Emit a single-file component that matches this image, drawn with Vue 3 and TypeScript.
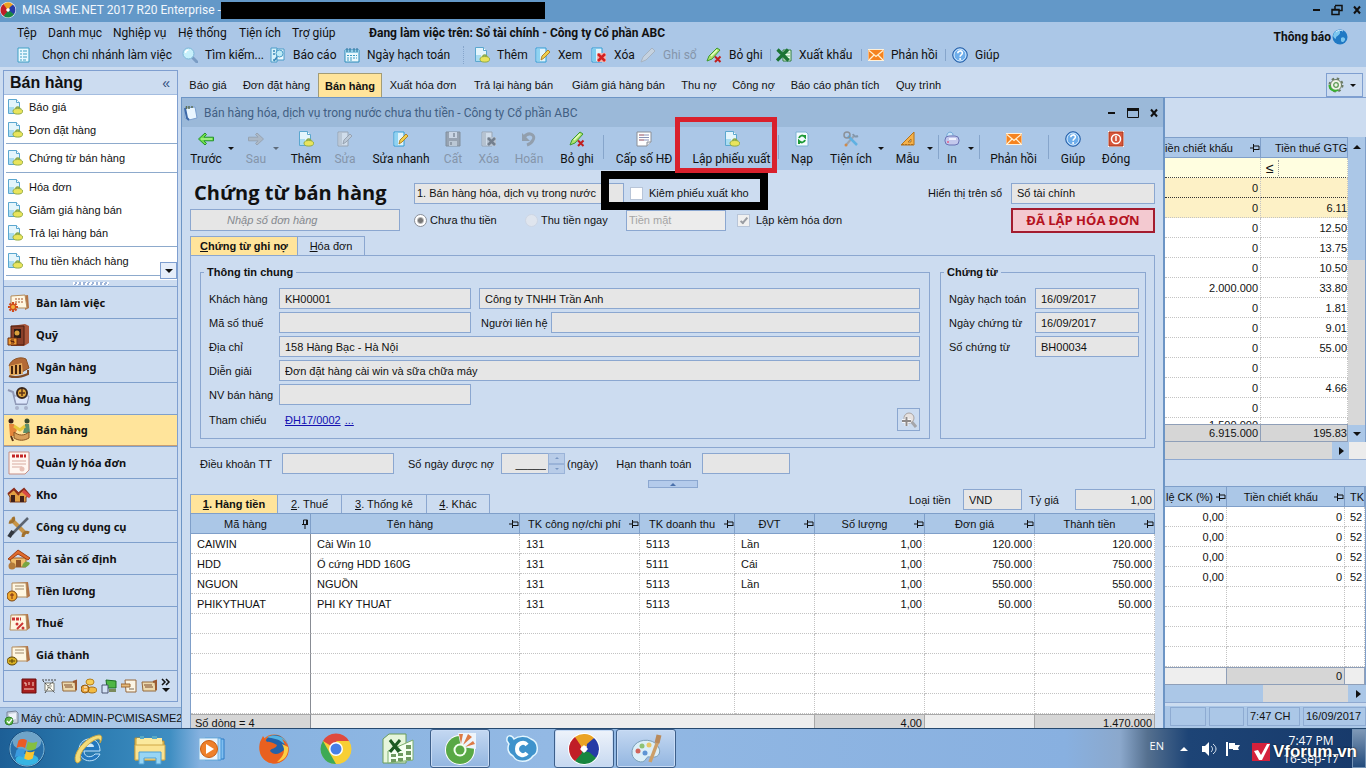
<script setup lang="ts">
import { ref } from 'vue'

interface Tool { label: string; icon: string; off?: boolean; sep?: boolean; grip?: boolean }
interface Action { label?: string; icon?: string; off?: boolean; sep?: boolean; arrow?: boolean; marked?: boolean }
interface Column { label: string; align: string }

const menus = ['Tệp', 'Danh mục', 'Nghiệp vụ', 'Hệ thống', 'Tiện ích', 'Trợ giúp']

const tools: Tool[] = [
  { label: 'Chọn chi nhánh làm việc', icon: 'list' },
  { label: 'Tìm kiếm...', icon: 'search' },
  { label: 'Báo cáo', icon: 'report' },
  { label: 'Ngày hạch toán', icon: 'calendar', grip: true },
  { label: 'Thêm', icon: 'doc' },
  { label: 'Xem', icon: 'edit' },
  { label: 'Xóa', icon: 'delete' },
  { label: 'Ghi sổ', icon: 'pen', off: true },
  { label: 'Bỏ ghi', icon: 'penx', sep: true },
  { label: 'Xuất khẩu', icon: 'excel', sep: true },
  { label: 'Phản hồi', icon: 'mail', sep: true },
  { label: 'Giúp', icon: 'help' },
]

const shortcuts = [
  ['Báo giá', 'Đơn đặt hàng'],
  ['Chứng từ bán hàng'],
  ['Hóa đơn', 'Giảm giá hàng bán', 'Trả lại hàng bán'],
  ['Thu tiền khách hàng'],
]

const modules = [
  { label: 'Bàn làm việc', icon: 'desk' },
  { label: 'Quỹ', icon: 'safe' },
  { label: 'Ngân hàng', icon: 'bank' },
  { label: 'Mua hàng', icon: 'cart' },
  { label: 'Bán hàng', icon: 'sell' },
  { label: 'Quản lý hóa đơn', icon: 'invoice' },
  { label: 'Kho', icon: 'store' },
  { label: 'Công cụ dụng cụ', icon: 'wrench' },
  { label: 'Tài sản cố định', icon: 'house' },
  { label: 'Tiền lương', icon: 'salary' },
  { label: 'Thuế', icon: 'tax' },
  { label: 'Giá thành', icon: 'cost' },
]
const activeModule = ref('Bán hàng')
const miniIcons = ['m1', 'm2', 'm3', 'm4', 'm5', 'm6', 'm3']

const pages = ['Báo giá', 'Đơn đặt hàng', 'Bán hàng', 'Xuất hóa đơn', 'Trả lại hàng bán', 'Giảm giá hàng bán', 'Thu nợ', 'Công nợ', 'Báo cáo phân tích', 'Quy trình']
const activePage = ref('Bán hàng')

const actions: Action[] = [
  { label: 'Trước', icon: 'prev' }, { arrow: true },
  { label: 'Sau', icon: 'next', off: true }, { arrow: true, off: true },
  { label: 'Thêm', icon: 'doc' },
  { label: 'Sửa', icon: 'edit', off: true },
  { label: 'Sửa nhanh', icon: 'edit' },
  { label: 'Cất', icon: 'save', off: true },
  { label: 'Xóa', icon: 'delete', off: true },
  { label: 'Hoãn', icon: 'undo', off: true },
  { label: 'Bỏ ghi', icon: 'penx' },
  { label: 'Cấp số HĐ', icon: 'form', sep: true },
  { label: 'Lập phiếu xuất', icon: 'doc', marked: true },
  { label: 'Nạp', icon: 'refresh', sep: true },
  { label: 'Tiện ích', icon: 'tools' }, { arrow: true },
  { label: 'Mẫu', icon: 'ruler' }, { arrow: true },
  { label: 'In', icon: 'printer', sep: true }, { arrow: true },
  { label: 'Phản hồi', icon: 'mail', sep: true },
  { label: 'Giúp', icon: 'help', sep: true },
  { label: 'Đóng', icon: 'power' },
]

const gridTabs = [['1', 'Hàng tiền'], ['2', 'Thuế'], ['3', 'Thống kê'], ['4', 'Khác']]
const activeGridTab = ref('1')

const columns: Column[] = [
  { label: 'Mã hàng', align: 'l' },
  { label: 'Tên hàng', align: 'l' },
  { label: 'TK công nợ/chi phí', align: 'l' },
  { label: 'TK doanh thu', align: 'l' },
  { label: 'ĐVT', align: 'l' },
  { label: 'Số lượng', align: 'r' },
  { label: 'Đơn giá', align: 'r' },
  { label: 'Thành tiền', align: 'r' },
]
const blank = ['', '', '', '', '', '', '', '']
const rows = [
  ['CAIWIN', 'Cài Win 10', '131', '5113', 'Lần', '1,00', '120.000', '120.000'],
  ['HDD', 'Ổ cứng HDD 160G', '131', '5111', 'Cái', '1,00', '750.000', '750.000'],
  ['NGUON', 'NGUỒN', '131', '5113', 'Lần', '1,00', '550.000', '550.000'],
  ['PHIKYTHUAT', 'PHI KY THUAT', '131', '5113', '', '1,00', '50.000', '50.000'],
  blank, blank, blank, blank, blank,
]
const totals = ['Số dòng = 4', '', '', '', '', '4,00', '', '1.470.000']

const listRows = [
  ['0', ''], ['0', '6.11'], ['0', '12.50'], ['0', '13.75'], ['0', '10.50'], ['2.000.000', '33.80'],
  ['0', '1.81'], ['0', '9.01'], ['0', '55.00'], ['0', ''], ['0', '4.66'], ['0', ''],
]
const detailRows = [
  ['0,00', '0', '52'], ['0,00', '0', '52'], ['0,00', '0', '52'], ['0,00', '0', '52'],
  ['', '', ''], ['', '', ''], ['', '', ''], ['', '', ''],
]

const apps = [
  { name: 'Internet Explorer', icon: 'ie' },
  { name: 'Explorer', icon: 'folder' },
  { name: 'Media Player', icon: 'media' },
  { name: 'Firefox', icon: 'firefox' },
  { name: 'Chrome', icon: 'chrome' },
  { name: 'Excel', icon: 'xls' },
  { name: 'Cốc Cốc', icon: 'coccoc', open: true },
  { name: 'CCleaner', icon: 'cc' },
  { name: 'MISA', icon: 'misa', open: true, front: true },
  { name: 'Paint', icon: 'paint', open: true },
]
</script>

<template>
  <div class="screen">
    <svg class="sprite" aria-hidden="true">
      <symbol id="doc" viewBox="0 0 16 16"><path d="M1.500.5h8l3 3v11h-11z" fill="#e4f5fc" stroke="#5ba7cf" /><path d="M9.500.5v3h3" fill="#fff" stroke="#5ba7cf" /><path d="M2 8h5v6H2z" fill="#a9dcf0" /><path d="M8.500 11c0-4 4.500-4 4.500 0" fill="#dff0c0" stroke="#8aa84a" stroke-width="1.300" /><ellipse cx="10.800" cy="12.300" rx="4.800" ry="2.800" fill="#e9e45c" stroke="#93ab45" /></symbol>
      <symbol id="list" viewBox="0 0 16 16"><path d="M1 1h11v14H1z" fill="#e8f8ff" stroke="#3f9fc4" /><path d="M3 4h2M6 4h4M3 7h2M6 7h4M3 10h2M6 10h4M3 13h2M6 13h3" stroke="#3f9fc4" /></symbol>
      <symbol id="search" viewBox="0 0 16 16"><path d="M10 10l5 5" stroke="#7a9cc4" stroke-width="3" stroke-linecap="round" /><circle cx="6.500" cy="6.500" r="5.500" fill="#c6f0fb" stroke="#7db7d8" /><path d="M3.500 6a3 3 0 0 1 3-3" stroke="#fff" stroke-width="1.500" fill="none" /></symbol>
      <symbol id="report" viewBox="0 0 16 16"><path d="M1 1h6v14H1z" fill="#d5f1fa" stroke="#4b9cc8" /><path d="M7 2h7v11H7z" fill="#eefaff" stroke="#4b9cc8" /><circle cx="9.500" cy="6.500" r="3.500" fill="#bdebf7" stroke="#4b9cc8" /><path d="M3 4h2M3 7h2M3 13h2M7 10l-3 4" stroke="#3a88b7" stroke-width="1.500" /></symbol>
      <symbol id="calendar" viewBox="0 0 16 16"><path d="M1 3h14v12H1z" fill="#e9f8fd" stroke="#2c8dba" /><path d="M1 3h14v3H1z" fill="#8fcbe4" /><path d="M3 1v4M6 1v4M10 1v4M13 1v4" stroke="#216f98" /><path d="M3 8.500h10M3 11h10M3 13h6" stroke="#3b9cc4" stroke-dasharray="2 1" /></symbol>
      <symbol id="edit" viewBox="0 0 16 16"><path d="M1 1h10v14H1z" fill="#dff3fc" stroke="#2f9cd5" /><path d="M2 2h3v12H2z" fill="#8fd3f2" /><path d="M6 13l1-4 6-6 2 2-6 6z" fill="#f0cf4e" stroke="#b0842b" /></symbol>
      <symbol id="delete" viewBox="0 0 16 16"><path d="M1 1h10v14H1z" fill="#dff3fc" stroke="#2f9cd5" /><path d="M2 2h3v12H2z" fill="#7ccdf0" /><path d="M6 6h9v9H6z" fill="#f0b5ae" /><path d="M7 7l7 7M14 7l-7 7" stroke="#d32020" stroke-width="2.500" /></symbol>
      <symbol id="pen" viewBox="0 0 16 16"><path d="M1 15l2-5L12 1l3 3-9 9z" fill="#d9dde0" stroke="#9aa5b0" /></symbol>
      <symbol id="penx" viewBox="0 0 16 16"><path d="M1 14l2-5L11 1l3 2-8 9z" fill="#aee26c" stroke="#3d9b2e" /><path d="M5 9L11 3" stroke="#e8ffc8" stroke-width="1.500" /><path d="M9 9.500l5.500 5.500M14.500 9.500L9 15" stroke="#c01e1e" stroke-width="2" /></symbol>
      <symbol id="excel" viewBox="0 0 16 16"><path d="M7 3h8v11H7z" fill="#f0fff0" stroke="#2d7d3a" /><path d="M8 6h6M8 9h6M8 12h6" stroke="#6cb076" /><path d="M1.500 2.500l11 11M12 2.500l-11 11" stroke="#1b7434" stroke-width="3.200" /></symbol>
      <symbol id="mail" viewBox="0 0 16 16"><path d="M0 2.500h16v11H0z" fill="#f58320" stroke="#fff0d8" /><path d="M1 3.500l7 6 7-6M1 13l5-5M15 13l-5-5" fill="none" stroke="#fff2d6" stroke-width="1.200" /></symbol>
      <symbol id="help" viewBox="0 0 16 16"><circle cx="8" cy="8" r="7.300" fill="#4a90dc" stroke="#275ea4" /><circle cx="8" cy="8" r="6" fill="#6eaeeb" stroke="#dff0ff" /><path d="M5.800 6.200c0-3 4.600-3 4.600-.2 0 2-2.300 1.900-2.300 3.700" fill="none" stroke="#fff" stroke-width="1.600" /><circle cx="8.100" cy="11.900" r="1" fill="#fff" /></symbol>
      <symbol id="globe" viewBox="0 0 16 16"><circle cx="8" cy="8" r="7.500" fill="#2079c4" /><path d="M2 4c3-4 7-3 6 0S4 7 4 9s-2 0-3-2zM9 9c2-2 5 0 4 2s-3 3-4 1z" fill="#7cc6ef" /><path d="M4 3c2-2 5-2 7-1" stroke="#d6f1ff" fill="none" /></symbol>
      <symbol id="gear" viewBox="0 0 16 16"><circle cx="8" cy="8" r="6.500" fill="none" stroke="#6b7a63" stroke-width="2" stroke-dasharray="2.500 2.600" /><circle cx="8" cy="8" r="5.500" fill="#eef3e6" stroke="#6b7a63" /><circle cx="8" cy="8" r="2.300" fill="none" stroke="#5c9a55" stroke-width="1.300" /><path d="M1.500 8c0 5 5 7 8.500 5" stroke="#38b32f" stroke-width="2" fill="none" /></symbol>
      <symbol id="prev" viewBox="0 0 16 16"><path d="M.5 8L7 2l1.500 1.500L6 6.200h9.500v3.600H6l2.500 2.700L7 14z" fill="#6fdc4a" stroke="#23952a" /><path d="M3 8h11" stroke="#c8ffab" /></symbol>
      <symbol id="next" viewBox="0 0 16 16"><path d="M15.500 8L9 2 7.500 3.500 10 6.200H.5v3.600H10l-2.500 2.700L9 14z" fill="#a6adb5" stroke="#7c8896" /></symbol>
      <symbol id="save" viewBox="0 0 16 16"><path d="M1 1h14v14H1z" fill="#808891" stroke="#59626d" /><path d="M4 1h8v6H4z" fill="#dfe3e7" /><path d="M4 10h8v5H4z" fill="#c2c8cf" /><path d="M9 2v4M6 11v3" stroke="#59626d" stroke-width="1.500" /></symbol>
      <symbol id="undo" viewBox="0 0 16 16"><path d="M3 6c5-6 12-2 9 3-1 2-3 4-6 5" fill="none" stroke="#76808d" stroke-width="3" /><path d="M1 2v8h8z" fill="#76808d" /></symbol>
      <symbol id="form" viewBox="0 0 16 16"><path d="M1 1h14v10l-4 4H1z" fill="#fff" stroke="#8a8f98" /><path d="M3 4h10M3 6.500h10M3 9h10" stroke="#8a94b8" /><path d="M3 4h5M3 9h5" stroke="#c88080" /><path d="M11 15v-4h4" fill="#e6e8ec" stroke="#8a8f98" /></symbol>
      <symbol id="refresh" viewBox="0 0 16 16"><path d="M2 1h10l2 2v12H2z" fill="#f2fbff" stroke="#7db2d2" /><path d="M5 7c1-3 4-3 6-1V4M11 9c-1 3-4 3-6 1v3" fill="none" stroke="#1d9a36" stroke-width="2" /></symbol>
      <symbol id="tools" viewBox="0 0 16 16"><path d="M3 14l8-9" stroke="#9aa4b1" stroke-width="2" /><path d="M5 5l9 9" stroke="#5fb1e2" stroke-width="2.500" /><circle cx="4" cy="4" r="3" fill="none" stroke="#8b9199" stroke-width="1.500" /><path d="M10 3c1 3 3 3 5 2" stroke="#8397ab" stroke-width="2" fill="none" /><circle cx="3" cy="14" r="1.500" fill="#d08a49" /></symbol>
      <symbol id="ruler" viewBox="0 0 16 16"><path d="M1 14L14 1v13z" fill="#f5b14a" stroke="#b77317" /><path d="M8 11l3-3v3z" fill="#abc7e7" stroke="#b77317" /><path d="M3 14v-1M6 14v-1M9 14v-1M12 14v-1" stroke="#8a4e0a" /></symbol>
      <symbol id="printer" viewBox="0 0 16 16"><path d="M3 6C2 0 9 0 9 4" fill="#c9e6fa" stroke="#6ba4d6" /><rect x="1" y="5" width="14" height="9" rx="4" fill="#c3c8ec" stroke="#6a72b4" /><path d="M5 8h7" stroke="#f1f2ff" stroke-width="2" /><circle cx="4" cy="11" r="1" fill="#e3608a" /></symbol>
      <symbol id="power" viewBox="0 0 16 16"><path d="M0 0h16v16H0z" fill="#fff" /><path d="M1 1h14v14H1z" fill="#d7563a" stroke="#a9361f" /><circle cx="8" cy="8" r="4.500" fill="none" stroke="#fff" stroke-width="1.500" /><path d="M8 5v5" stroke="#fff" stroke-width="1.500" /></symbol>
      <symbol id="clip" viewBox="0 0 16 16"><path d="M2 3l10-1 2 11-8 2-4-2z" fill="#eaf6ff" stroke="#7ba0cf" /><path d="M2 3l2 10 2 2" fill="none" stroke="#3c68a8" stroke-width="2" /><path d="M3.500 1v3M6 1v3M9 1v2" stroke="#5e6f55" stroke-width="1.500" /></symbol>
      <symbol id="host" viewBox="0 0 16 16"><path d="M3 2l9-1 2 2v10l-9 1-2-2z" fill="#c7cfdc" stroke="#76849a" /><path d="M5 4l7-1v6l-7 1z" fill="#eef3fa" /><circle cx="5" cy="11" r="4" fill="#5fb648" stroke="#2e7d2a" /><path d="M3 11l2 2 3-4" fill="none" stroke="#fff" stroke-width="1.300" /></symbol>
      <symbol id="pin" viewBox="0 0 10 10"><path d="M0 5h3M3.500 1v8M4 3h5v4M4 6.500h5" fill="none" stroke="#111" /></symbol>
      <symbol id="pinv" viewBox="0 0 10 10"><path d="M5 10V6M2 5.500h6M3.500 5V1h4v4M6.500 1v4" fill="none" stroke="#111" /></symbol>
      <symbol id="zoomin" viewBox="0 0 16 16"><path d="M10 9l5 6" stroke="#a5a6aa" stroke-width="3" /><circle cx="8" cy="6" r="5" fill="#e6e2e0" stroke="#a8a3a2" /><path d="M1 9h9M5.500 5v9" stroke="#fff" stroke-width="3.500" /><path d="M1 9h9M5.500 5v9" stroke="#8e8a89" stroke-width="2" /></symbol>

      <symbol id="desk" viewBox="0 0 24 24"><path d="M5 6l16-2 1 13-4 2V6z" fill="#b27447" /><path d="M4 5l14-1 2 13H4z" fill="#fff7e2" stroke="#b58d5c" /><path d="M8 8h9M8 11h8" stroke="#a5522c" stroke-dasharray="2 1" /><path d="M6 11v10M1 16h10M2.500 12.500l7 7M9.500 12.500l-7 7" stroke="#d04c1c" stroke-width="2.200" /><circle cx="6" cy="16" r="2" fill="#f2b13b" /></symbol>
      <symbol id="safe" viewBox="0 0 24 24"><path d="M4 3l14-2 4 2v17l-5 3H4z" fill="#a9563a" /><path d="M4 3h13v19H4z" fill="#8a4029" stroke="#4a1c0e" /><path d="M7 6h7v9H7z" fill="#2a1a14" /><circle cx="10" cy="10" r="2.500" fill="#d9a13c" /><path d="M1 15h9v7H1z" fill="#ef9a33" stroke="#6b2c0f" /><path d="M7 17H4v1.500h3V20H4" stroke="#5a230d" fill="none" /></symbol>
      <symbol id="bank" viewBox="0 0 24 24"><path d="M2 11C4 4 13 1 19 4l3 9-7 4z" fill="#b36a36" stroke="#8c5429" /><path d="M2 11l13-3 1 11-13 2z" fill="#e4a95a" /><path d="M5 11v8M9 10v9M13 10v9" stroke="#41210f" stroke-width="2" /><path d="M2 21c5 2 12 1 19-2v-4" fill="none" stroke="#7e4a26" stroke-width="2" /></symbol>
      <symbol id="cart" viewBox="0 0 24 24"><path d="M1 3l5 2 3 12h11" fill="none" stroke="#9098b4" stroke-width="2" /><path d="M7 9h15l-2 8H9z" fill="#dce6fb" stroke="#8e99b9" /><circle cx="15" cy="6" r="5" fill="#e2a73a" stroke="#3c281c" stroke-width="2" /><path d="M12 6h6M15 2v7" stroke="#5e3317" stroke-width="1.500" /><circle cx="10" cy="21" r="2" fill="#a9b3cc" /><circle cx="19" cy="21" r="2" fill="#a9b3cc" /></symbol>
      <symbol id="sell" viewBox="0 0 24 24"><circle cx="4" cy="3" r="2.500" fill="#3a2218" /><path d="M2 6h5l3 6-3 6H3z" fill="#e5863b" /><circle cx="20" cy="3" r="2.500" fill="#394a2d" /><path d="M18 6h4l1 9h-7z" fill="#5c8f6b" /><path d="M7 14c5 4 10 4 15 0v6c-5 3-10 3-15 0z" fill="#d8a05b" stroke="#8a5523" /><path d="M7 8l6 4 5-4" stroke="#e7c83c" stroke-width="3" fill="none" /><path d="M4 18l2 5" stroke="#593017" stroke-width="2" /></symbol>
      <symbol id="invoice" viewBox="0 0 24 24"><path d="M2 1h20v18l-4 4H2z" fill="#fff7f2" stroke="#c78f84" /><path d="M5 5h14" stroke="#c32626" stroke-width="3" stroke-dasharray="3 1" /><path d="M5 10h14M5 13h14M5 16h10" stroke="#d8aba0" /><circle cx="15" cy="18" r="2.500" fill="#e8c2b8" /></symbol>
      <symbol id="store" viewBox="0 0 24 24"><path d="M1 11l6-5 5 4 5-4 6 7-4 1v5H3v-5z" fill="#e3a043" stroke="#7a3a1a" /><path d="M1 11l6-5 5 6M12 10l5-4 6 7" stroke="#8c2d1c" stroke-width="2" fill="none" /><path d="M4 12h4v7H4zM13 13h4v6h-4z" fill="#40201a" /><path d="M16 8l7 6" stroke="#d84848" stroke-width="3" /></symbol>
      <symbol id="wrench" viewBox="0 0 24 24"><path d="M4 4l15 15" stroke="#c79447" stroke-width="4" /><path d="M21 3L5 19" stroke="#5b6470" stroke-width="2.500" /><path d="M2 7c3 1 6-2 4-5M16 22c0-4 3-6 6-4" fill="none" stroke="#a1712e" stroke-width="3" /><path d="M6 16l-4 6" stroke="#32373f" stroke-width="4" /></symbol>
      <symbol id="house" viewBox="0 0 24 24"><path d="M3 11h16v9H5z" fill="#f0bd6c" stroke="#9f6327" /><path d="M1 12L11 3l12 8-2 2-10-6-8 6z" fill="#e06c2c" stroke="#a03e14" /><path d="M9 13h5v7H9z" fill="#91552a" /><path d="M15 20c1-6 5-6 8-4-1 3-4 5-8 4z" fill="#77a544" /><circle cx="5" cy="19" r="3.500" fill="#b47b3b" /></symbol>
      <symbol id="salary" viewBox="0 0 24 24"><path d="M6 4l15-1 2 14-3 2z" fill="#b27447" /><path d="M5 4h14l1 14H5z" fill="#fff7e2" stroke="#b58d5c" /><path d="M8 7h9M8 10h9" stroke="#a08a6d" /><circle cx="5" cy="17" r="5" fill="#f0a92e" stroke="#7b4410" /><path d="M5 14v6M3 16h4" stroke="#7b2f10" /></symbol>
      <symbol id="tax" viewBox="0 0 24 24"><path d="M6 4l15-1 2 14-3 2z" fill="#b27447" /><path d="M4 4h15l1 15H3z" fill="#fff7e2" stroke="#b58d5c" /><path d="M5 8h9" stroke="#cc3434" stroke-width="3" stroke-dasharray="3 1" /><path d="M10 18l6-6" stroke="#cc3434" stroke-width="2" /><circle cx="10" cy="13" r="1.500" fill="#cc3434" /><circle cx="16" cy="17" r="1.500" fill="#cc3434" /></symbol>
      <symbol id="cost" viewBox="0 0 24 24"><path d="M6 4l15-1 2 14-3 2z" fill="#b27447" /><path d="M5 4h14l1 14H5z" fill="#fff7e2" stroke="#b58d5c" /><path d="M8 7h9M8 10h9" stroke="#a08a6d" /><ellipse cx="5" cy="18" rx="5" ry="4" fill="#d8b024" stroke="#5d4408" /><path d="M2 18h6M5 16v4" stroke="#5d4408" /></symbol>

      <symbol id="m1" viewBox="0 0 16 16"><path d="M1 1h14v14H1z" fill="#a81f1f" stroke="#6b0f0f" /><path d="M3 5h2v3M8 4v3M12 4v4M3 11h10" stroke="#ffd9c8" fill="none" /></symbol>
      <symbol id="m2" viewBox="0 0 16 16"><path d="M4 5h9v8H4z" fill="#fffef5" stroke="#7b7b70" /><path d="M1 2h14M2 3l5 5 6-5M4 15l4-6 6 6" stroke="#444" fill="none" stroke-dasharray="2 1" /><path d="M6 8h5M6 10h4" stroke="#9a9a8c" /></symbol>
      <symbol id="m3" viewBox="0 0 16 16"><path d="M1 4h13l1 9H2z" fill="#ecd9ad" stroke="#94683a" /><path d="M3 7h8M4 9h8" stroke="#7d4a2c" /><path d="M12 4l3-1v9" stroke="#9c5b32" stroke-width="2" fill="none" /></symbol>
      <symbol id="m4" viewBox="0 0 16 16"><ellipse cx="9" cy="4" rx="4" ry="3" fill="#f6cd55" stroke="#b5801d" /><ellipse cx="11" cy="12" rx="5" ry="3" fill="#f3bb42" stroke="#a5701b" /><ellipse cx="4" cy="11" rx="4" ry="4" fill="#eaa63c" stroke="#8f5b16" /><path d="M3 9h3M3 12h3" stroke="#fff" /></symbol>
      <symbol id="m5" viewBox="0 0 16 16"><path d="M5 2l10 1v7H6z" fill="#4fb644" stroke="#1c6d22" /><path d="M1 7h6v8H1z" fill="#d4e2f6" stroke="#4a5470" /><path d="M8 11h7v3H8z" fill="#7b8a5c" /></symbol>
      <symbol id="m6" viewBox="0 0 16 16"><path d="M4 2h11v12H5z" fill="#fbf5e5" stroke="#96683d" /><path d="M0 6h9v3H0z" fill="#e7bb7b" stroke="#9a6634" /><path d="M8 11h5" stroke="#7c6a53" /></symbol>

      <symbol id="misa" viewBox="0 0 32 32"><circle cx="16" cy="16" r="16" fill="#fff" /><path d="M7 4a15 15 0 0 1 19 1l-6 8-9 1z" fill="#eba324" /><path d="M26 5a15 15 0 0 1 2 20l-10-5 1-9z" fill="#263aa6" /><path d="M28 25a15 15 0 0 1-21 3l6-10 8 1z" fill="#188640" /><path d="M7 28A15 15 0 0 1 7 4l6 9 1 7z" fill="#c01e27" /><path d="M16 12l4 4-4 4-4-4z" fill="#fff" /></symbol>
      <symbol id="ie" viewBox="0 0 32 32"><path d="M28 18H12c0 7 8 7 11 3h5c-5 11-21 8-21-4C7 3 28 1 28 18z" fill="#2377bd" stroke="#bfe4fb" /><path d="M12 14c1-5 10-5 10 0z" fill="#cbe8fa" /><path d="M5 30C-2 25 11 4 27 2c4 0 3 5 1 8 1-5-2-5-7-2C13 13 6 22 9 27c-1 2-3 3-4 3z" fill="#f3dc7a" stroke="#c6a544" /></symbol>
      <symbol id="folder" viewBox="0 0 32 32"><path d="M1 5h8l2 3h19v19H1z" fill="#e9c967" stroke="#b98d2f" /><path d="M3 5h25v20H3z" fill="#fbe99d" /><path d="M1 12h30v15H1z" fill="#fbe391" stroke="#cfa747" /><path d="M5 31V19h22v12h-5v-6H10v6z" fill="#97d5f4" stroke="#4c9fd4" /><path d="M6 3h4v3H6zM18 3h5v3h-5z" fill="#59aac5" /></symbol>
      <symbol id="media" viewBox="0 0 32 32"><path d="M14 6h14v20H14z" fill="#7fbef0" stroke="#2d7bc5" /><path d="M9 5h16v22H9z" fill="#abd8f9" stroke="#4292d4" /><path d="M3 5h19v22H3z" fill="#eaf5fd" stroke="#7db3dc" /><circle cx="13" cy="16" r="8.500" fill="#ee802b" stroke="#c85d13" /><path d="M10 11l8 5-8 5z" fill="#fff" /></symbol>
      <symbol id="firefox" viewBox="0 0 32 32"><circle cx="16" cy="16" r="14.500" fill="#ed6b20" /><circle cx="17" cy="13" r="11" fill="#2462a9" /><path d="M9 4c8-4 20 0 21 9l-5-3c-5-5-10-4-16-6z" fill="#54b3e3" /><path d="M2 9l3-6 4 6c4-1 7 2 10 3-1 4-6 3-7 6 4 5 10 3 14-1 2-4 0-8-2-11 8 4 9 15 2 21C13 37-2 24 2 9z" fill="#e9601f" /><path d="M30 14c1 8-4 14-11 15 7-6 9-12 5-18z" fill="#fbce45" /></symbol>
      <symbol id="chrome" viewBox="0 0 32 32"><circle cx="16" cy="16" r="15" fill="#f7cf35" /><path d="M16 16L3 8a15 15 0 0 1 26 0z" fill="#df4a3e" /><path d="M3 8l9 16 4 7A15 15 0 0 1 3 8z" fill="#3eaa55" /><path d="M16 8h13a15 15 0 0 1-13 23l7-12z" fill="#f7cf35" /><circle cx="16" cy="16" r="7" fill="#fff" /><circle cx="16" cy="16" r="5.500" fill="#477fe6" /></symbol>
      <symbol id="xls" viewBox="0 0 32 32"><path d="M1 6l6-5h17v29H1z" fill="#e6f6db" stroke="#6a9c58" /><path d="M6 18l25-11v20l-25 3z" fill="#f5fff1" stroke="#7bae6c" /><path d="M8 6l12 12h-5zM18 6l-9 12h-2z" fill="#1e6b22" /><path d="M8 7l9 12M18 7L8 19" stroke="#1e5b22" stroke-width="3" /><path d="M9 21h5v3H9zM16 20h5v3h-5zM24 18h5v4h-5zM9 26h5v3H9zM16 25h5v3h-5zM24 24h5v3h-5zM24 12h5v4h-5z" fill="#6f9a60" /></symbol>
      <symbol id="coccoc" viewBox="0 0 32 32"><circle cx="16" cy="17" r="15" fill="#fff" /><circle cx="16" cy="17" r="14" fill="#58a845" /><path d="M17 14L14 0h18v16z" fill="#edf4fb" /><path d="M17 11L15 1h4zM19 12l5-11 4 3zM21 14l8-6 2 3z" fill="#dd7a45" /><circle cx="16" cy="17" r="6.500" fill="#f2fff0" /><circle cx="16" cy="17" r="4.500" fill="#58a845" /></symbol>
      <symbol id="cc" viewBox="0 0 32 32"><path d="M1 8c-1-7 5-6 7-2 4-3 12-4 17 0 8 3 8 14 2 17-5 7-16 7-20 0-5-2-6-8-4-12z" fill="#3f93cc" stroke="#e3f6ff" stroke-width="1.500" /><path d="M21 12c-3-4-10-2-10 4s7 8 10 4" fill="none" stroke="#fff" stroke-width="4" /></symbol>
      <symbol id="paint" viewBox="0 0 32 32"><path d="M2 21C1 11 11 5 21 8c9 3 12 14 4 16-5 1-7-2-9 2-3 6-13 2-14-5z" fill="#dceff8" stroke="#7a9fb7" /><circle cx="8" cy="18" r="2.500" fill="#d0655b" /><circle cx="12" cy="13" r="2.500" fill="#8dc274" /><circle cx="19" cy="12" r="2.500" fill="#e9c766" /><circle cx="15" cy="20" r="2.500" fill="#5f95d4" /><path d="M20 29L28 8" stroke="#cc9f68" stroke-width="3.500" /><path d="M27 10l2-8" stroke="#b98a5c" stroke-width="5" /></symbol>
      <symbol id="orb" viewBox="0 0 40 40"><circle cx="20" cy="20" r="19" fill="#123d6c" /><circle cx="20" cy="20" r="18" fill="#286fa9" stroke="#88c7e7" /><ellipse cx="20" cy="12" rx="15" ry="10" fill="#6fa4c8" /><ellipse cx="20" cy="31" rx="12" ry="6" fill="#37b5e3" /><path d="M11 11c3-2 6-2 9 0l-2 8c-3-2-6-2-9 0z" fill="#ea5b25" /><path d="M21 12c3 2 6 2 10 0l-2 8c-4 2-7 2-10 0z" fill="#85bf3f" /><path d="M9 21c3-2 6-2 9 0l-2 8c-3-2-6-2-9 0z" fill="#3b9be0" /><path d="M19 22c3 2 6 2 9 0l-2 8c-3 2-6 2-9 0z" fill="#fbc530" /></symbol>
      <symbol id="sound" viewBox="0 0 16 16"><path d="M1 5h3l4-4v14l-4-4H1z" fill="#fff" /><path d="M10 5c2 2 2 4 0 6M12 3c4 3 4 7 0 10" fill="none" stroke="#dfe9f4" /></symbol>
      <symbol id="flag" viewBox="0 0 16 16"><path d="M2 1v14" stroke="#fff" stroke-width="2" /><path d="M4 2h6v2h5l-2 3 1 2H8V8H4z" fill="#fff" /></symbol>
    </svg>

    <header class="titlebar">
      <svg class="s16"><use href="#misa" /></svg>
      <h1>MISA SME.NET 2017 R20 Enterprise -</h1>
      <span class="redacted"></span>
      <div class="winbtns">
        <button type="button" aria-label="Thu nhỏ"><svg viewBox="0 0 12 12"><path d="M2 6h7" stroke="#111" stroke-width="2" /></svg></button>
        <button type="button" aria-label="Khôi phục"><svg viewBox="0 0 12 12"><path d="M4 1.500h7v5H8M1 5.500h7v5H1zM4 2v3M1 6h7" fill="none" stroke="#111" stroke-width="1.500" /></svg></button>
        <button type="button" aria-label="Đóng"><svg viewBox="0 0 12 12"><path d="M3 2.500l6 7M9 2.500l-6 7" stroke="#111" stroke-width="2" /></svg></button>
      </div>
    </header>

    <div class="commands">
      <div class="bars">
        <nav class="menubar">
          <button v-for="m in menus" :key="m" type="button">{{ m }}</button>
          <strong>Đang làm việc trên: Sổ tài chính - Công ty Cổ phần ABC</strong>
        </nav>
        <div class="toolbar">
          <button v-for="t in tools" :key="t.label" type="button" :disabled="t.off" :class="{ sep: t.sep, grip: t.grip }">
            <svg class="s16"><use :href="'#' + t.icon" /></svg><span>{{ t.label }}</span>
          </button>
        </div>
      </div>
      <button type="button" class="notice">Thông báo<svg class="s16"><use href="#globe" /></svg></button>
    </div>

    <main class="main">
      <aside class="side">
        <div class="sidebox">
          <div class="sidehead"><h2>Bán hàng</h2><button type="button" aria-label="Thu gọn">«</button></div>
          <div class="shortcuts">
            <ul v-for="(group, g) in shortcuts" :key="g">
              <li v-for="s in group" :key="s"><button type="button"><svg class="s16"><use href="#doc" /></svg>{{ s }}</button></li>
            </ul>
            <button type="button" class="more" aria-label="Cuộn xuống"><i class="down"></i></button>
          </div>
          <div class="splitter"></div>
          <nav class="modules">
            <button v-for="m in modules" :key="m.label" type="button" :class="{ on: m.label === activeModule }" @click="activeModule = m.label">
              <svg><use :href="'#' + m.icon" /></svg>{{ m.label }}
            </button>
          </nav>
          <div class="minis">
            <svg v-for="(m, i) in miniIcons" :key="i" class="s16"><use :href="'#' + m" /></svg>
            <svg class="chev" viewBox="0 0 10 16"><path d="M1 1l3 3-3 3M5 1l3 3-3 3" fill="none" stroke="#111" stroke-width="1.500" /><path d="M1 10h8l-4 4z" fill="#111" /></svg>
          </div>
        </div>
        <div class="server"><svg class="s16"><use href="#host" /></svg><span>Máy chủ: ADMIN-PC\MISASME2</span></div>
      </aside>

      <section class="work">
        <nav class="pages">
          <button v-for="p in pages" :key="p" type="button" :class="{ on: p === activePage }" @click="activePage = p">{{ p }}</button>
          <button type="button" class="gearbtn" aria-label="Tùy chọn"><svg class="s16"><use href="#gear" /></svg><i class="down"></i></button>
        </nav>

        <div class="split">
          <section class="dialog">
            <header class="dlgtitle">
              <svg class="s16"><use href="#clip" /></svg>
              <h2>Bán hàng hóa, dịch vụ trong nước chưa thu tiền - Công ty Cổ phần ABC</h2>
              <div class="winbtns">
                <button type="button" aria-label="Thu nhỏ"><svg viewBox="0 0 12 12"><path d="M2 6h7" stroke="#111" stroke-width="2" /></svg></button>
                <button type="button" aria-label="Phóng to"><svg viewBox="0 0 12 12"><path d="M.5 2.500h11v8H.5z" fill="none" stroke="#111" /><path d="M0 2.500h12" stroke="#111" stroke-width="3" /></svg></button>
                <button type="button" aria-label="Đóng"><svg viewBox="0 0 12 12"><path d="M3 2.500l6 7M9 2.500l-6 7" stroke="#111" stroke-width="2" /></svg></button>
              </div>
            </header>

            <div class="actions">
              <template v-for="(a, i) in actions" :key="i">
                <button v-if="a.arrow" type="button" class="drop" :disabled="a.off" aria-label="Mở danh sách"><i class="down"></i></button>
                <button v-else type="button" :disabled="a.off" :class="{ sep: a.sep }">
                  <svg class="s16"><use :href="'#' + a.icon" /></svg><span>{{ a.label }}</span>
                  <span v-if="a.marked" class="redmark"></span>
                </button>
              </template>
            </div>

            <form class="form" @submit.prevent>
              <div class="line">
                <h3>Chứng từ bán hàng</h3>
                <select class="kind" aria-label="Loại chứng từ"><option>1. Bán hàng hóa, dịch vụ trong nước</option></select>
                <div class="export"><label><input type="checkbox">Kiêm phiếu xuất kho</label><span class="blackmark"></span></div>
                <label for="book" class="push">Hiển thị trên sổ</label>
                <input id="book" class="w144" value="Sổ tài chính" readonly>
              </div>
              <div class="line second">
                <input class="order" placeholder="Nhập số đơn hàng" aria-label="Số đơn hàng" readonly>
                <label class="r1"><input type="radio" name="pay" checked>Chưa thu tiền</label>
                <label class="r2"><input type="radio" name="pay" class="faint">Thu tiền ngay</label>
                <input class="cash" value="Tiền mặt" aria-label="Hình thức" disabled>
                <label class="withinv"><input type="checkbox" class="dim" checked>Lập kèm hóa đơn</label>
                <strong class="stamp">ĐÃ LẬP HÓA ĐƠN</strong>
              </div>

              <div class="tabs top">
                <button type="button" class="on"><u>C</u>hứng từ ghi nợ</button>
                <button type="button"><u>H</u>óa đơn</button>
              </div>
              <div class="panel">
                <fieldset class="general">
                  <legend>Thông tin chung</legend>
                  <div class="fr"><label for="cust">Khách hàng</label><input id="cust" class="w192" value="KH00001" readonly><input class="grow gap8" value="Công ty TNHH Trần Anh" aria-label="Tên khách hàng" readonly></div>
                  <div class="fr"><label for="taxno">Mã số thuế</label><input id="taxno" class="w192" readonly><label for="contact" class="contact">Người liên hệ</label><input id="contact" class="grow" readonly></div>
                  <div class="fr"><label for="addr">Địa chỉ</label><input id="addr" class="grow" value="158 Hàng Bạc - Hà Nội" readonly></div>
                  <div class="fr"><label for="desc">Diễn giải</label><input id="desc" class="grow" value="Đơn đặt hàng cài win và sữa chữa máy" readonly></div>
                  <div class="fr"><label for="seller">NV bán hàng</label><input id="seller" class="w192" readonly></div>
                  <div class="fr last"><span class="lab">Tham chiếu</span><a href="#ref">ĐH17/0002</a><a href="#more">...</a><button type="button" aria-label="Xem"><svg class="s16"><use href="#zoomin" /></svg></button></div>
                </fieldset>
                <fieldset class="voucher">
                  <legend>Chứng từ</legend>
                  <div class="fr"><label for="d1">Ngày hạch toán</label><input id="d1" class="grow" value="16/09/2017" readonly></div>
                  <div class="fr"><label for="d2">Ngày chứng từ</label><input id="d2" class="grow" value="16/09/2017" readonly></div>
                  <div class="fr"><label for="d3">Số chứng từ</label><input id="d3" class="grow" value="BH00034" readonly></div>
                </fieldset>
              </div>

              <div class="terms">
                <label for="t1">Điều khoản TT</label><input id="t1" readonly>
                <label for="t2">Số ngày được nợ</label>
                <span class="spin"><input id="t2" value="_____" readonly><span><button type="button" aria-label="Tăng"><i class="up"></i></button><button type="button" aria-label="Giảm"><i class="down"></i></button></span></span>
                <span>(ngày)</span>
                <label for="t3">Hạn thanh toán</label><input id="t3" readonly>
              </div>
              <button type="button" class="handle" aria-label="Thu gọn"><i class="up"></i></button>

              <div class="gridhead">
                <div class="tabs detail">
                  <button v-for="t in gridTabs" :key="t[0]" type="button" :class="{ on: t[0] === activeGridTab }" @click="activeGridTab = t[0]"><u>{{ t[0] }}</u>. {{ t[1] }}</button>
                </div>
                <div class="money">
                  <label for="cur">Loại tiền</label><input id="cur" value="VND" readonly>
                  <label for="rate">Tỷ giá</label><input id="rate" value="1,00" readonly>
                </div>
              </div>

              <table class="items">
                <colgroup><col class="c120"><col><col class="c120"><col class="c95"><col class="c80"><col class="c110"><col class="c110"><col class="c120"></colgroup>
                <thead><tr><th v-for="(c, i) in columns" :key="c.label"><div><span>{{ c.label }}</span><svg><use :href="i === 0 ? '#pinv' : '#pin'" /></svg></div></th></tr></thead>
                <tbody><tr v-for="(r, i) in rows" :key="i"><td v-for="(v, j) in r" :key="j" :class="columns[j].align">{{ v }}</td></tr></tbody>
                <tfoot><tr><td v-for="(v, j) in totals" :key="j" :class="[columns[j].align, { sum: v }]"><div>{{ v }}</div></td></tr></tfoot>
              </table>
            </form>
          </section>

          <aside class="behind">
            <div class="listwrap">
              <table class="list">
                <colgroup><col class="c96"><col></colgroup>
                <thead>
                  <tr><th><div><span>Tiền chiết khấu</span><svg><use href="#pin" /></svg></div></th><th><div class="start"><span>Tiền thuế GTGT</span></div></th></tr>
                  <tr class="filter"><td></td><td class="l"><b>≤</b></td></tr>
                </thead>
                <tbody>
                  <tr v-for="(r, i) in listRows" :key="i" :class="{ hot: i < 2, focus: i === 0 }"><td>{{ r[0] }}</td><td class="cut">{{ r[1] }}</td></tr>
                  <tr class="half"><td><div>1.500.000</div></td><td></td></tr>
                </tbody>
                <tfoot><tr><td>6.915.000</td><td class="cut">195.83</td></tr></tfoot>
              </table>
              <div class="vbar"><i class="up"></i><span></span><i class="down"></i></div>
            </div>
            <div class="hbar first"><i class="right"></i></div>
            <table class="list second">
              <colgroup><col class="c62"><col><col class="c20"></colgroup>
              <thead><tr><th><div><span>Tỷ lệ CK (%)</span><svg><use href="#pin" /></svg></div></th><th><div><span class="mid">Tiền chiết khấu</span><svg><use href="#pin" /></svg></div></th><th><div class="start tk"><span>TK</span></div></th></tr></thead>
              <tbody><tr v-for="(r, i) in detailRows" :key="i"><td>{{ r[0] }}</td><td>{{ r[1] }}</td><td class="cut tk">{{ r[2] }}</td></tr></tbody>
              <tfoot><tr><td class="pale"></td><td>0</td><td class="pale"></td></tr></tfoot>
            </table>
            <div class="hbar last"><i class="right"></i></div>
            <div class="status"><span></span><span></span><span>7:47 CH</span><span>16/09/2017</span></div>
          </aside>
        </div>
      </section>
    </main>

    <footer class="taskbar">
      <button type="button" class="orb" aria-label="Start"><svg><use href="#orb" /></svg></button>
      <nav class="apps">
        <button v-for="a in apps" :key="a.name" type="button" :aria-label="a.name" :class="{ open: a.open, front: a.front }"><svg><use :href="'#' + a.icon" /></svg></button>
      </nav>
      <div class="tray">
        <span class="lang">EN</span>
        <i class="up"></i>
        <svg class="s16"><use href="#sound" /></svg>
        <svg class="s16"><use href="#flag" /></svg>
        <div class="clock"><span>7:47 PM</span><span>16-Sep-17</span></div>
        <span class="peek"></span>
        <div class="brand"><svg viewBox="0 0 18 18"><path d="M0 0h18v18H0z" fill="#d4213c" /><path d="M2 8l4-1 3 5 6-11 3 0-8 16H7z" fill="#fff" /></svg><b>Vforum.vn</b></div>
      </div>
    </footer>
  </div>
</template>

<style>
body { margin: 0; background: #ccdcf0; }
</style>

<style scoped>
.screen { min-height: 100vh; display: flex; flex-direction: column; background: #ccdcf0; color: #111; font: 11px/14px "Liberation Sans", Arial, sans-serif; overflow: hidden; }
.screen *, .screen *::before, .screen *::after { box-sizing: border-box; }
.sprite { position: absolute; width: 0; height: 0; }
button, input, select { font: inherit; color: inherit; margin: 0; }
button { padding: 0; border: 0; background: none; white-space: nowrap; }
h1, h2, h3, ul { margin: 0; padding: 0; font-weight: normal; list-style: none; }
svg { display: block; flex: none; }
.s16 { width: 16px; height: 16px; }
i.down { width: 0; height: 0; border: 3px solid transparent; border-top-color: #111; border-bottom: 0; }
i.up { width: 0; height: 0; border: 4px solid transparent; border-bottom-color: #111; border-top: 0; }
i.right { width: 0; height: 0; border: 4px solid transparent; border-left: 5px solid #111; border-right: 0; }
label, span { white-space: nowrap; }

.titlebar { height: 22px; display: flex; align-items: center; background: #6398c8; padding-bottom: 2px; }
.titlebar h1 { margin-left: 6px; width: 199px; white-space: nowrap; font: 12px/18px Roboto, sans-serif; color: #f2f7fc; }
.redacted { width: 324px; height: 17px; background: #000; }
.winbtns { display: flex; gap: 8px; margin-left: auto; padding-right: 3px; }
.winbtns svg { width: 12px; height: 12px; }

.commands { height: 45px; display: flex; background: #abc7e7; font: 12px/18px Roboto, sans-serif; }
.bars { flex: 1; padding-left: 17px; }
.menubar { display: grid; grid-template-columns: 31px 65px 65px 61px 53px 77px auto; height: 22px; align-items: center; justify-items: start; }
.menubar strong { font-weight: 700; white-space: nowrap; }
.toolbar { display: grid; grid-template-columns: 165px 88px 74px 130px 61px 56px 49px 66px 70px 92px 84px auto; height: 22px; align-items: center; }
.toolbar button { display: flex; align-items: center; gap: 7px; height: 18px; }
.toolbar button:first-child { gap: 9px; }
.toolbar .sep::after, .toolbar .grip::after { content: ""; margin-left: auto; margin-right: 6px; height: 12px; border-left: 1px solid #86a5cb; }
.toolbar .grip::after { border-left-style: dotted; height: 18px; margin-right: 10px; }
button:disabled { color: #8595aa; }
.notice { display: flex; align-items: center; gap: 1px; height: 30px; padding-right: 18px; font-weight: 700; }

.main { flex: 1; display: flex; min-width: 0; }
.side { width: 181px; flex: none; display: flex; flex-direction: column; padding-top: 3px; }
.sidebox { margin: 0 3px; border: 1px solid #7f9fd0; }
.sidehead { display: flex; justify-content: space-between; align-items: center; height: 24px; padding: 0 7px 0 6px; border-bottom: 1px solid #a4bde0; background: #ccdcf0; }
.sidehead h2 { font: 700 16px/22px "Liberation Sans", sans-serif; }
.sidehead button { font-size: 14px; color: #2f4d7e; }
.shortcuts { position: relative; height: 185px; background: #fff; overflow: hidden; }
.shortcuts ul { margin: 0 0 0 2px; padding: 2px 0 2px 1px; border-bottom: 1px solid #8daacc; }
.shortcuts ul:first-child { padding-top: 0; }
.shortcuts li { height: 23px; }
.shortcuts ul li:only-child { height: 24px; }
.shortcuts li button { display: flex; align-items: center; gap: 6px; height: 23px; }
.shortcuts .more { position: absolute; right: 0; bottom: 1px; width: 17px; height: 17px; border: 1px solid #7f9fd0; background: #e6eefa; display: grid; place-items: center; }
.more i.down { border-width: 4px; border-bottom: 0; }
.splitter { height: 6px; background: repeating-linear-gradient(110deg, #fff 0 2px, #9fb6da 2px 4px) center / 36px 3px no-repeat; }
.modules button { display: flex; align-items: center; gap: 5px; width: 100%; height: 32px; padding-left: 3px; border-top: 1px solid #7fa0cc; font: 700 11px/16px "Noto Sans", sans-serif; }
.modules svg { width: 24px; height: 24px; }
.modules .on { background: #ffe49b; border-bottom: 1px solid #c89f74; }
.minis { display: flex; align-items: center; gap: 4px; height: 31px; padding-left: 17px; border-top: 1px solid #7fa0cc; }
.chev { width: 10px; height: 16px; }
.server { margin-top: auto; height: 21px; display: flex; align-items: center; gap: 1px; padding-left: 4px; background: #abc7e7; border-top: 1px solid #8eabd2; overflow: hidden; }

.work { flex: 1; min-width: 0; display: flex; flex-direction: column; padding-top: 6px; }
.pages { display: grid; grid-template-columns: 54px 83px 64px 82px 99px 111px 50px 59px 104px 63px 1fr; height: 24px; }
.pages button { border: 1px solid transparent; }
.pages .on { background: #ffe49b; border: 1px solid #a39c76; border-bottom: 0; font-weight: 700; }
.pages .gearbtn { justify-self: end; width: 37px; margin-right: 3px; display: flex; align-items: center; justify-content: space-between; padding: 0 6px 0 1px; border: 1px solid #7f9fd0; }
.split { flex: 1; display: flex; min-height: 0; }
.dialog { flex: 1; min-width: 0; border: solid #6d95c5; border-width: 1px 2px 0 1px; display: flex; flex-direction: column; }
.behind { width: 201px; flex: none; display: flex; flex-direction: column; border-top: 1px solid #7f9fd0; }

.dlgtitle { height: 29px; display: flex; align-items: center; gap: 5px; padding-left: 1px; background: #9bb9d9; color: #425f83; }
.dlgtitle h2 { font: 12px/18px Roboto, sans-serif; white-space: nowrap; }
.dlgtitle .winbtns { gap: 9px; padding-right: 3px; }
.actions { display: grid; grid-template-columns: 40px 15px 30px 18px 34px 44px 68px 36px 36px 44px 52px 82px 93px 48px 50px 14px 35px 13px 28px 13px 69px 50px 36px; height: 43px; padding-left: 4px; background: #abc7e7; font: 12px/18px Roboto, sans-serif; }
.actions button { position: relative; display: flex; flex-direction: column; align-items: center; padding-top: 4px; gap: 3px; }
.actions .sep::before { content: ""; position: absolute; left: 0; top: 8px; height: 24px; border-left: 1px solid #86a5cb; }
.actions .drop { padding: 20px 0 0 2px; align-items: flex-start; }
.actions button:disabled svg, .toolbar button:disabled svg { filter: grayscale(1); opacity: .55; }
.actions button:disabled i { opacity: .5; }
.redmark { position: absolute; left: -10px; top: -10px; width: 102px; height: 56px; border: 5px solid #d9202c; z-index: 3; pointer-events: none; }

.form { padding: 12px 8px 0; flex: 1; display: flex; flex-direction: column; }
.form input, .form select { height: 21px; min-width: 0; padding: 0 5px; border: 1px solid #8ba7d0; background: #e6e6e6; border-radius: 0; outline: none; }
.form input[type="checkbox"], .form input[type="radio"] { appearance: none; width: 13px; height: 13px; padding: 0; flex: none; background: #fff; border: 1px solid #b8c5d8; }
.form input[type="radio"] { border-radius: 50%; border-color: #a8adb5; }
.form input[type="radio"]:checked { background: radial-gradient(circle, #777 0 2px, #fff 4px); border-color: #8b9099; }
.form input.faint { background: #dfe5ee; border-color: #cdd6e4; }
.form input.dim { background: #f0f0f0; display: grid; place-items: center; }
.form input.dim::before { content: ""; width: 4px; height: 8px; border: solid #9a9da3; border-width: 0 2px 2px 0; transform: rotate(40deg); }
.line { display: flex; align-items: center; height: 22px; }
.line.second { margin-top: 5px; }
.line h3 { width: 224px; flex: none; padding-left: 4px; font: 700 20px/22px "Open Sans", sans-serif; white-space: nowrap; }
.form .kind { appearance: none; width: 210px; padding: 0 2px; }
.export { position: relative; margin-left: 6px; }
.line label { display: flex; align-items: center; gap: 6px; }
.line .r1, .line .r2 { gap: 3px; }
.blackmark { position: absolute; left: -29px; top: -15px; width: 167px; height: 39px; border: 8px solid #000; z-index: 2; pointer-events: none; }
.push { margin-left: auto; margin-right: 9px; }
.form .w144 { width: 144px; }
.form .order { width: 210px; height: 22px; margin-right: 14px; padding-left: 36px; font-style: italic; }
.order::placeholder { color: #84888e; opacity: 1; }
.r1 { width: 111px; }
.r2 { width: 101px; }
.form .cash { width: 100px; padding: 0 2px; color: #a5a5a5; background: #ececec; }
.withinv { margin-left: 11px; }
.stamp { margin-left: auto; width: 144px; height: 25px; border: 2px solid #a31c2f; background: #f3c9d0; color: #b5121f; font: 700 13px/21px "Open Sans", sans-serif; text-align: center; }

.tabs { display: flex; }
.tabs button { height: 19px; border: 1px solid #8ba7d0; border-bottom: 0; margin-right: -1px; }
.tabs .on { background: #ffe49b; font-weight: 700; }
.tabs.top { margin-top: 5px; }
.tabs.top button { width: 68px; }
.tabs.top .on { width: 108px; }
.panel { display: flex; gap: 10px; border: 1px solid #8ba7d0; padding: 9px 8px 8px 9px; }
fieldset { margin: 0; padding: 9px 9px 7px 8px; border: 1px solid #8ba7d0; min-width: 0; display: flex; flex-direction: column; gap: 3px; }
legend { padding: 0 3px; margin-left: -5px; font-weight: 700; line-height: 14px; }
.general { flex: 1; }
.voucher { width: 206px; padding-right: 6px; }
.fr { display: flex; align-items: center; height: 21px; }
.fr > label:first-child, .fr > .lab { width: 70px; flex: none; }
.voucher .fr > label:first-child { width: 86px; }
.w192 { width: 192px; flex: none; }
.grow { flex: 1; }
.gap8 { margin-left: 8px; }
.contact { width: 80px; padding-left: 10px; flex: none; }
.fr.last { height: 23px; }
.fr a { margin-left: 6px; margin-right: -2px; color: #1310b0; }
.fr.last button { margin-left: auto; width: 23px; height: 23px; border: 1px solid #8ba7d0; display: grid; place-items: center; }

.terms { display: flex; align-items: center; height: 21px; margin-top: 5px; padding-left: 10px; }
.terms > label { width: 82px; }
.terms #t1 { width: 112px; margin-right: 14px; }
.terms label[for="t2"] { width: 93px; }
.terms label[for="t3"] { width: 86px; margin-left: 18px; }
.terms #t3 { width: 88px; }
.spin { display: flex; width: 64px; margin-right: 2px; }
.spin #t2 { width: 47px; text-align: right; padding: 0 2px; border-right: 0; }
.spin > span { width: 17px; display: flex; flex-direction: column; }
.spin button { flex: 1; display: grid; place-items: center; background: #b8cce8; border: 1px solid #9ab3d8; }
.spin i.up { border-width: 2px; border-top: 0; border-bottom-color: #7a98c4; }
.spin i.down { border-width: 2px; border-bottom: 0; border-top-color: #7a98c4; }
.handle { align-self: center; width: 50px; height: 8px; margin-top: 6px; border: 1px solid #8ba7d0; background: #b4cbeb; display: grid; place-items: center; }
.handle i.up { border-width: 3px; border-top: 0; border-bottom-color: #4a71ab; }
.gridhead { display: flex; justify-content: space-between; align-items: flex-end; height: 25px; }
.detail button:nth-child(1) { width: 88px; }
.detail button:nth-child(2) { width: 65px; }
.detail button:nth-child(3) { width: 86px; }
.detail button:nth-child(4) { width: 64px; }
.money { display: flex; align-items: center; align-self: flex-start; padding-top: 1px; }
.money label { width: 54px; }
.money #cur { width: 59px; margin-right: 7px; }
.money label[for="rate"] { width: 46px; }
.money #rate { width: 80px; text-align: right; padding-right: 2px; }

table { width: 100%; table-layout: fixed; border-collapse: separate; border-spacing: 0; background: #fff; }
.c120 { width: 120px; } .c95 { width: 95px; } .c96 { width: 96px; } .c80 { width: 80px; } .c110 { width: 110px; } .c62 { width: 62px; } .c20 { width: 20px; }
th { height: 21px; padding: 0; font-weight: normal; background: #abc7e7; border: solid #7f9fc9; border-width: 1px 1px 1px 0; }
th div { display: flex; align-items: center; overflow: hidden; }
th span { flex: 1; text-align: center; }
th svg { width: 10px; height: 10px; }
td { height: 20px; padding: 0 2px 0 6px; border: dotted #c3c3c3; border-width: 0 1px 1px 0; white-space: nowrap; overflow: hidden; }
td.r { text-align: right; }
.items { border-left: 1px solid #7f9fc9; }
.items td:first-child { border-right: 1px solid #888c94; }
.items tfoot td { height: 14px; padding: 0 2px 0 4px; background: #eee; border: solid #a8a8a8; border-width: 1px 1px 0 0; }
.items tfoot td div { height: 13px; line-height: 16px; overflow: hidden; }
.items tfoot td:nth-child(n+2):nth-child(-n+4) { border-right: 0; }
.items tfoot td.sum { background: #d6d6d6; }

.listwrap { display: flex; margin-top: 39px; border-right: 1px solid #7f9fc9; }
.list { flex: 1; width: 0; min-width: 0; }
.list th div { justify-content: flex-end; }
.list th span { flex: none; margin-right: 17px; }
.list th .start { justify-content: flex-start; padding-left: 14px; }
.list td { text-align: right; padding-left: 0; }
.list td.l { text-align: left; padding-left: 5px; }
.list td.l b { font: 14px/16px "Liberation Sans", sans-serif; display: inline-block; width: 13px; border-right: 1px dotted #999; }
.list td.cut { padding-right: 0; }
.filter td { background: #fffee0; border-bottom-color: #444; }
.hot td { background: #fdf1c6; }
.list .focus td { border-bottom-color: #333; }
.list .half td { height: 6px; border-bottom: 0; }
.half div { height: 6px; line-height: 14px; overflow: hidden; }
.list tfoot td { height: 18px; background: #d6d6d6; border: solid #8f9fb8; border-width: 1px 1px 1px 0; }
.list tfoot td.pale { background: #eee; }
.vbar { width: 17px; display: flex; flex-direction: column; align-items: center; background: #abc7e7; }
.vbar span { flex: 1; width: 100%; margin: 7px 0; background: linear-gradient(#abc7e7 0 104px, #d8d8d8 104px); }
.vbar i.up { margin-top: 8px; }
.vbar i.down { border-width: 4px; border-bottom: 0; margin-bottom: 6px; }
.hbar { display: flex; align-items: center; justify-content: flex-end; height: 17px; background: #d8d8d8; border-bottom: 1px solid #8fa9d0; }
.hbar.first { height: 18px; background: linear-gradient(to left, #ececec 17px, #abc7e7 17px 34px, #d8d8d8 34px); padding-right: 22px; }
.list.second { flex: none; width: 100%; margin-top: 26px; border-right: 1px solid #7f9fc9; }
.second th .mid { margin-right: 16px; }
.list.second th:first-child span { margin-right: 3px; }
.list.second th .tk { padding-left: 5px; }
.list.second th .tk span { margin-right: 0; }
.second td.tk { text-align: left; padding-left: 5px; }
.hbar.last { height: 18px; padding-right: 5px; background: linear-gradient(to left, #abc7e7 18px, #d8d8d8 18px 103px, #abc7e7 103px); }
.status { margin-top: auto; height: 22px; display: grid; grid-template-columns: 36px 35px 53px 1fr; gap: 3px; padding: 1px 0 2px 5px; background: #abc7e7; }
.status span { border: 1px solid #8eabd2; line-height: 17px; padding-left: 2px; overflow: hidden; }

.taskbar { height: 40px; display: flex; align-items: stretch; border-top: 1px solid #26496f; background: linear-gradient(90deg, #1d5f96 0, #2b7bb0 90px, #3f8ec2 170px, #86b2e0 200px, #93b9e4 40%, #88b0e0 78%, #8ba8cc 82%, #55708f 84%, #1d4476 87%, #17396a 100%); }
.orb { width: 58px; padding-left: 8px; }
.orb svg { width: 38px; height: 38px; }
.apps { display: flex; gap: 2px; }
.apps button { width: 60px; display: grid; place-items: center; border: 1px solid transparent; border-radius: 3px; }
.apps svg { width: 32px; height: 32px; }
.apps .open { border-color: #3d5f8a; background: linear-gradient(#c4d8f2, #93b6e0); box-shadow: inset 0 0 0 1px #c9dcf5; }
.apps .front { background: linear-gradient(#eef3fb, #c6d8f0); }
.tray { position: relative; margin-left: auto; display: flex; align-items: center; color: #fff; font: 12px/18px "Open Sans", sans-serif; }
.lang { margin-right: 16px; font-size: 11px; padding-bottom: 6px; }
.tray i.up { border-bottom-color: #fff; margin-right: 13px; }
.tray .s16 { margin-right: 8px; }
.clock { display: flex; flex-direction: column; align-items: center; width: 68px; margin-left: 28px; padding-top: 3px; }
.peek { align-self: stretch; width: 14px; margin-left: 7px; border: 1px solid #7392b5; background: linear-gradient(#7f98b6, #234b7c); }
.brand { position: absolute; right: 9px; top: 13px; display: flex; align-items: center; gap: 3px; }
.brand svg { width: 18px; height: 18px; }
.brand b { font: 700 17px/20px "Liberation Sans", sans-serif; text-shadow: 0 0 2px #000; }
</style>
